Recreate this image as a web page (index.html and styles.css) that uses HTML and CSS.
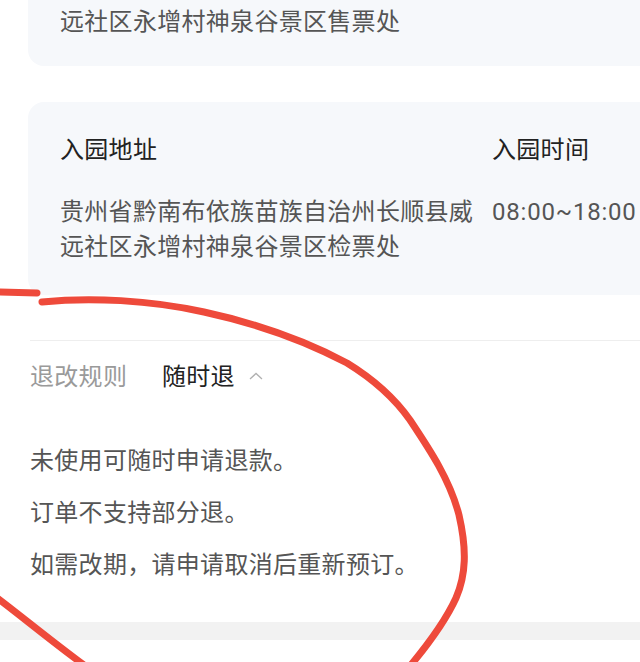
FILE: index.html
```html
<!DOCTYPE html>
<html lang="zh-CN">
<head>
<meta charset="utf-8">
<title>门票详情</title>
<link rel="stylesheet" href="styles.css">
</head>
<body>
<div class="page">
  <div class="card card-top">
    <div class="addr">远社区永增村神泉谷景区售票处</div>
  </div>

  <div class="card card-main">
    <div class="grid">
      <div class="title">入园地址</div>
      <div class="title">入园时间</div>
      <div class="addr">贵州省黔南布依族苗族自治州长顺县威远社区永增村神泉谷景区检票处</div>
      <div class="addr time">08:00~18:00</div>
    </div>
  </div>

  <div class="rules">
    <div class="rules-head">
      <span class="rules-label">退改规则</span>
      <span class="rules-value">随时退</span>
      <svg class="chev" width="16" height="10" viewBox="0 0 16 10"><path d="M2 8 L8 2.5 L14 8" fill="none" stroke="#b0b0b0" stroke-width="1.3"/></svg>
    </div>
    <div class="rules-body">
      <p>未使用可随时申请退款。</p>
      <p>订单不支持部分退。</p>
      <p>如需改期，请申请取消后重新预订。</p>
    </div>
  </div>

  <div class="band"></div>

  <svg class="mark" width="640" height="662" viewBox="0 0 640 662">
    <g fill="none" stroke="#ee4a3b" stroke-width="7" stroke-linecap="round" stroke-linejoin="round">
      <path d="M-4 292 L37 293"/>
      <path d="M42 302 C 90 297, 150 300, 204 312 C 250 322, 300 338, 347 363 C 378 382, 398 403, 410 420 C 430 450, 450 480, 459 515 C 467 550, 466 575, 456 598 C 445 622, 428 645, 405 672"/>
      <path d="M-4 597 C 20 615, 50 640, 88 668"/>
    </g>
  </svg>
</div>
</body>
</html>
```

FILE: styles.css
```css
html, body {
  margin: 0;
  padding: 0;
  background: #ffffff;
}

.page {
  position: relative;
  width: 640px;
  height: 662px;
  overflow: hidden;
  font-family: Roboto, "Noto Sans CJK SC", sans-serif;
  font-size: 24px;
  letter-spacing: 0.3px;
  color: #555555;
}

.card {
  background: #f6f8fb;
  margin-left: 28px;
  width: 660px;
  box-sizing: border-box;
  padding-left: 32px;
}

.card-top {
  border-radius: 0 0 16px 16px;
  padding-top: 4px;
  padding-bottom: 26px;
}

.card-main {
  margin-top: 36px;
  border-radius: 16px;
  padding-top: 30px;
  padding-bottom: 30px;
}

.addr {
  line-height: 35px;
  color: #555555;
}

.card-top .addr {
  line-height: 36px;
}

.grid {
  display: grid;
  grid-template-columns: 416px auto;
  column-gap: 16px;
  row-gap: 27px;
}

.title {
  line-height: 36px;
  color: #222222;
}

.time {
  white-space: nowrap;
  letter-spacing: 0.8px;
}

.rules {
  margin-left: 30px;
  margin-top: 45px;
  border-top: 1px solid #eeeeee;
}

.rules-head {
  display: flex;
  align-items: center;
  margin-top: 18px;
  height: 36px;
  line-height: 36px;
}

.rules-label {
  color: #9a9a9a;
  width: 132px;
}

.rules-value {
  color: #222222;
}

.chev {
  margin-left: 13px;
  margin-top: -2px;
}

.rules-body {
  margin-top: 48px;
  padding-bottom: 39px;
}

.rules-body p {
  margin: 0 0 16px 0;
  line-height: 36px;
  color: #555555;
}

.rules-body p:last-child {
  margin-bottom: 0;
}

.band {
  height: 18px;
  background: #f2f2f2;
}

.mark {
  position: absolute;
  left: 0;
  top: 0;
  pointer-events: none;
}
```
